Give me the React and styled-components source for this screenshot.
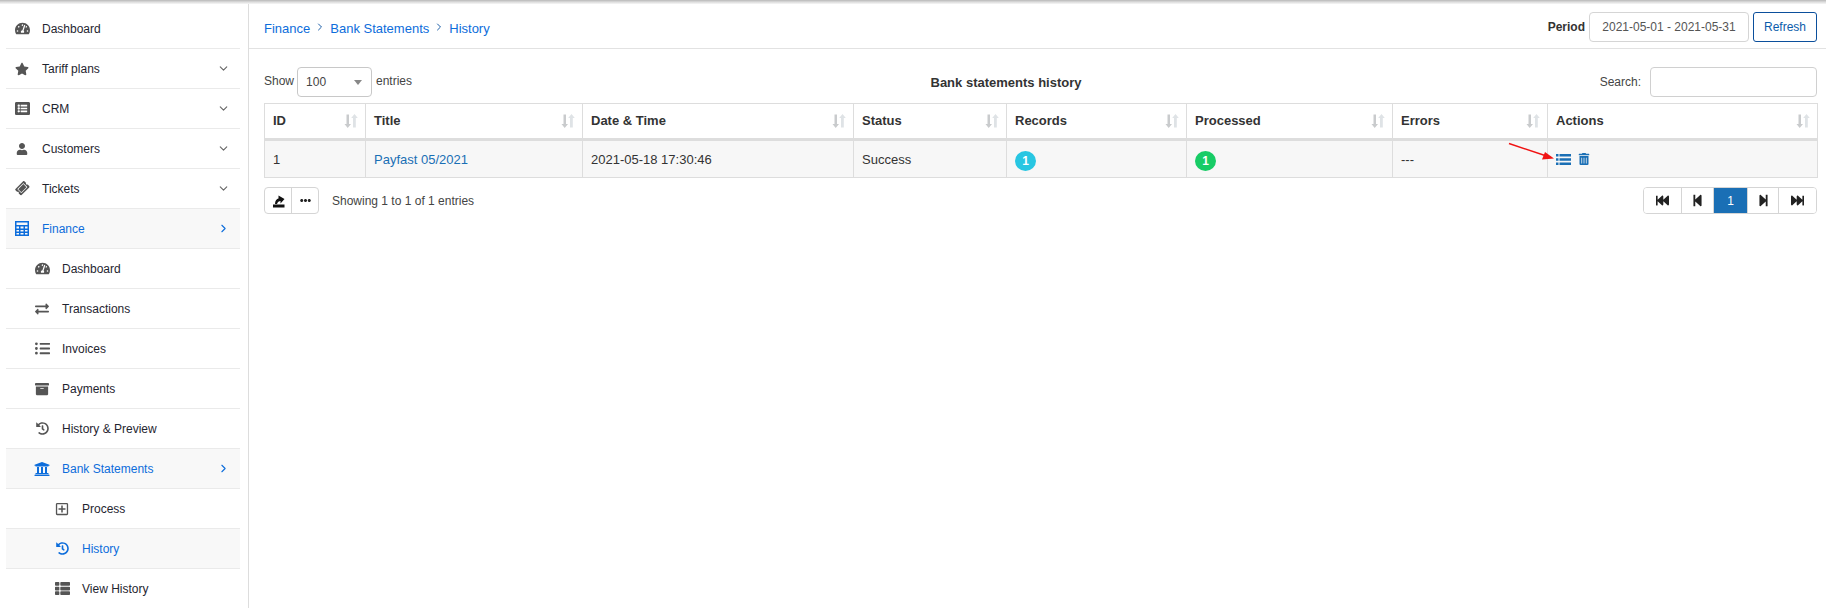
import React from 'react'
import styled, { createGlobalStyle } from 'styled-components'
import {
  FaArchive,
  FaEllipsisH,
  FaExchangeAlt,
  FaFastBackward,
  FaFastForward,
  FaHistory,
  FaListAlt,
  FaListUl,
  FaRegPlusSquare,
  FaStar,
  FaStepBackward,
  FaStepForward,
  FaTachometerAlt,
  FaThList,
  FaTicketAlt,
  FaTrashAlt,
  FaUniversity,
  FaUser,
} from 'react-icons/fa'
import { ChevronDown, ChevronRight } from 'lucide-react'

const BLUE = '#0d6ddb'
const DARK_BLUE = '#1a6fb5'

const GlobalStyle = createGlobalStyle`
  html, body {
    margin: 0;
    padding: 0;
    background: #fff;
    overflow: hidden;
  }
  body {
    font-family: "Liberation Sans", Arial, sans-serif;
    font-size: 13px;
    color: #333;
  }
`

const Page = styled.div`
  position: relative;
  display: flex;
  width: 1826px;
  height: 608px;
  overflow: hidden;
`

const TopShadow = styled.div`
  position: absolute;
  top: 0;
  left: 0;
  right: 0;
  height: 4px;
  background: linear-gradient(#b8b8b8, #dcdcdc 50%, #f7f7f7);
`

const Sidebar = styled.nav`
  flex: 0 0 249px;
  box-sizing: border-box;
  padding: 9px 8px 0 6px;
  border-right: 1px solid #ddd;
  height: 608px;
  overflow: hidden;
`

const MenuRow = styled.div`
  display: flex;
  align-items: center;
  box-sizing: border-box;
  height: 40px;
  padding-left: ${({ $level }) => 6 + $level * 20}px;
  padding-right: 10px;
  border-bottom: 1px solid #eaeaea;
  background: ${({ $active }) => ($active ? '#f8f8f8' : '#fff')};
  color: ${({ $active }) => ($active ? BLUE : '#1f2530')};
  font-size: 12px;
`

const MenuIcon = styled.span`
  display: flex;
  justify-content: center;
  align-items: center;
  flex: 0 0 20px;
  margin-right: 10px;
  color: ${({ $active }) => ($active ? BLUE : '#555')};
  font-size: ${({ $size }) => $size || 14}px;
  transform: ${({ $rotate }) => ($rotate ? 'rotate(-45deg)' : 'none')};
`

const MenuLabel = styled.span`
  flex: 1;
`

const Caret = styled.span`
  display: flex;
  color: ${({ $active }) => ($active ? BLUE : '#666')};
`

const Main = styled.main`
  flex: 1;
  min-width: 0;
`

const Header = styled.header`
  display: flex;
  align-items: center;
  justify-content: space-between;
  box-sizing: border-box;
  height: 49px;
  padding: 5px 9px 0 15px;
  border-bottom: 1px solid #e2e2e2;
`

const Breadcrumbs = styled.div`
  display: flex;
  align-items: center;
  gap: 4px;
  padding-top: 3px;
  color: ${BLUE};
  font-size: 13px;
`

const CrumbSeparator = styled.span`
  display: flex;
  color: #1d5fa8;
  margin-top: -3px;
`

const PeriodBar = styled.div`
  display: flex;
  align-items: center;
  gap: 4px;
`

const PeriodLabel = styled.b`
  font-size: 12px;
  color: #333;
`

const PeriodInput = styled.div`
  box-sizing: border-box;
  width: 160px;
  height: 30px;
  line-height: 28px;
  text-align: center;
  border: 1px solid #d5d5d5;
  border-radius: 4px;
  font-size: 12px;
  color: #555;
`

const RefreshButton = styled.button`
  box-sizing: border-box;
  width: 64px;
  height: 30px;
  padding: 0;
  background: #fff;
  border: 1px solid #0b4f9c;
  border-radius: 3px;
  color: #0b5cab;
  font: 12px "Liberation Sans", Arial, sans-serif;
`

const Content = styled.section`
  padding: 18px 9px 0 15px;
`

const Controls = styled.div`
  display: grid;
  grid-template-columns: 148px 1fr 217px;
  align-items: center;
  height: 30px;
  margin-bottom: 6px;
  font-size: 12px;
`

const ShowEntries = styled.div`
  display: flex;
  align-items: center;
  gap: 4px;
  margin-top: -3px;
  color: #444;
`

const SelectBox = styled.div`
  display: flex;
  align-items: center;
  justify-content: space-between;
  box-sizing: border-box;
  width: 75px;
  height: 30px;
  margin-top: 3px;
  margin-left: -1px;
  padding: 0 9px 0 8px;
  border: 1px solid #c8c8c8;
  border-radius: 4px;
  color: #444;
`

const SelectArrow = styled.span`
  width: 0;
  height: 0;
  border-left: 4px solid transparent;
  border-right: 4px solid transparent;
  border-top: 5px solid #888;
`

const TableTitle = styled.div`
  text-align: center;
  font-size: 13px;
  font-weight: bold;
  color: #333;
`

const SearchBox = styled.label`
  display: flex;
  align-items: center;
  justify-content: flex-end;
  gap: 9px;
  color: #444;
`

const SearchInput = styled.input`
  box-sizing: border-box;
  width: 167px;
  height: 30px;
  padding: 0 8px;
  border: 1px solid #d0d0d0;
  border-radius: 4px;
  outline: none;
`

const Table = styled.table`
  width: 1553px;
  table-layout: fixed;
  border-collapse: collapse;
  font-size: 13px;
`

const HeadCell = styled.th`
  position: relative;
  box-sizing: border-box;
  height: 36px;
  padding: 0 8px 1px;
  border: 1px solid #ddd;
  border-bottom: 3px solid #ddd;
  text-align: left;
  font-weight: bold;
  color: #333;
`

const SortMark = styled.svg`
  position: absolute;
  right: 7px;
  top: 9px;
`

const BodyCell = styled.td`
  box-sizing: border-box;
  height: 38px;
  padding: 0 8px;
  border: 1px solid #ddd;
  background: #f7f7f7;
  color: #333;
`

const TitleLink = styled.a`
  color: ${DARK_BLUE};
`

const CountBadge = styled.span`
  display: inline-flex;
  align-items: center;
  justify-content: center;
  width: 21px;
  height: 20px;
  margin-top: 3px;
  border-radius: 50%;
  background: ${({ $tone }) => $tone};
  color: #fff;
  font-size: 12px;
  font-weight: bold;
`

const ActionIcons = styled.div`
  display: flex;
  align-items: center;
  gap: 7px;
  color: ${DARK_BLUE};
`

const Arrow = styled.svg`
  position: absolute;
  left: 1505px;
  top: 140px;
`

const Footer = styled.div`
  display: flex;
  align-items: center;
  height: 27px;
  margin-top: 9px;
`

const ButtonGroup = styled.div`
  display: flex;
  box-sizing: border-box;
  height: 27px;
  border: 1px solid #d5d5d5;
  border-radius: 4px;
  overflow: hidden;
`

const ToolButton = styled.div`
  display: flex;
  align-items: center;
  justify-content: center;
  width: 26px;
  color: #222;
  font-size: 11px;
  & + & {
    border-left: 1px solid #d5d5d5;
  }
`

const EntriesInfo = styled.div`
  flex: 1;
  margin-left: 13px;
  font-size: 12px;
  color: #444;
`

const PageButton = styled.div`
  display: flex;
  align-items: center;
  justify-content: center;
  box-sizing: border-box;
  width: ${({ $width }) => $width}px;
  background: ${({ $active }) => ($active ? DARK_BLUE : '#fff')};
  color: ${({ $active }) => ($active ? '#fff' : '#222')};
  font-size: ${({ $active }) => ($active ? '12px' : '13px')};
  & + & {
    border-left: 1px solid #d5d5d5;
  }
`

const CalculatorIcon = () => (
  <svg width="14" height="15" viewBox="0 0 14 15" fill="currentColor">
    <path d="M0 0h14v15H0zM1.500 1.500v2.500h11V1.500zM1.500 5.500v2h2.500v-2zM5.500 5.500v2h3v-2zM10 5.500v2h2.500v-2zM1.500 9v1.500h2.500V9zM5.500 9v1.500h3V9zM10 9v1.500h2.500V9zM1.500 12v1.500h2.500V12zM5.500 12v1.500h3V12zM10 12v1.500h2.500V12z" fillRule="evenodd" />
  </svg>
)

const BarsIcon = () => (
  <svg width="15" height="11" viewBox="0 0 15 11" fill="currentColor">
    <path d="M0 0h2.500v2.500H0zM3.500 0H15v2.500H3.500zM0 4.200h2.500v2.500H0zM3.500 4.200H15v2.500H3.500zM0 8.400h2.500V11H0zM3.500 8.400H15V11H3.500z" />
  </svg>
)

const ExportIcon = () => (
  <svg width="13" height="14" viewBox="0 0 13 14">
    <path d="M1 10.500h11.500V13.500H1z" fill="#111" />
    <path d="M3 10c0-3.500 1.500-5 3.500-5.500V1.500L12.500 5 8.500 9.500V7c-1.500.2-3 1-3.500 3z" fill="#111" />
  </svg>
)

const menu = [
  { label: 'Dashboard', icon: <FaTachometerAlt />, level: 0, size: 15 },
  { label: 'Tariff plans', icon: <FaStar />, level: 0, caret: 'down' },
  { label: 'CRM', icon: <FaListAlt />, level: 0, caret: 'down', size: 15 },
  { label: 'Customers', icon: <FaUser />, level: 0, caret: 'down', size: 12 },
  { label: 'Tickets', icon: <FaTicketAlt />, level: 0, caret: 'down', rotate: true, size: 13 },
  { label: 'Finance', icon: <CalculatorIcon />, level: 0, caret: 'right', active: true },
  { label: 'Dashboard', icon: <FaTachometerAlt />, level: 1, size: 15 },
  { label: 'Transactions', icon: <FaExchangeAlt />, level: 1 },
  { label: 'Invoices', icon: <FaListUl />, level: 1, size: 15 },
  { label: 'Payments', icon: <FaArchive />, level: 1 },
  { label: 'History & Preview', icon: <FaHistory />, level: 1, size: 13 },
  { label: 'Bank Statements', icon: <FaUniversity />, level: 1, caret: 'right', active: true, size: 16 },
  { label: 'Process', icon: <FaRegPlusSquare />, level: 2 },
  { label: 'History', icon: <FaHistory />, level: 2, active: true, size: 13 },
  { label: 'View History', icon: <FaThList />, level: 2, size: 15 },
]

const columns = [
  { title: 'ID', width: 101 },
  { title: 'Title', width: 217 },
  { title: 'Date & Time', width: 271 },
  { title: 'Status', width: 153 },
  { title: 'Records', width: 180 },
  { title: 'Processed', width: 206 },
  { title: 'Errors', width: 155 },
  { title: 'Actions', width: 270 },
]

const pages = [
  { width: 37, content: <FaFastBackward /> },
  { width: 32, content: <FaStepBackward /> },
  { width: 34, content: '1', active: true },
  { width: 31, content: <FaStepForward /> },
  { width: 38, content: <FaFastForward /> },
]

const SortIcon = () => (
  <SortMark width="14" height="16" viewBox="0 0 14 16">
    <path d="M2.500 1.500h2.500v9.500h2L3.700 15 .5 11h2z" fill="#c9cbcd" />
    <path d="M10.500 1l3.300 4h-2v9.500H9V5H7.200z" fill="#dfe3e6" />
  </SortMark>
)

const App = () => (
  <Page>
    <GlobalStyle />
    <TopShadow />
    <Sidebar>
      {menu.map(({ label, icon, level, caret, active, rotate, size }, index) => (
        <MenuRow key={`${label}-${index}`} $level={level} $active={active}>
          <MenuIcon $active={active} $rotate={rotate} $size={size}>
            {icon}
          </MenuIcon>
          <MenuLabel>{label}</MenuLabel>
          {caret && (
            <Caret $active={active}>
              {caret === 'down' ? <ChevronDown size={13} /> : <ChevronRight size={13} />}
            </Caret>
          )}
        </MenuRow>
      ))}
    </Sidebar>
    <Main>
      <Header>
        <Breadcrumbs>
          <span>Finance</span>
          <CrumbSeparator><ChevronRight size={12} /></CrumbSeparator>
          <span>Bank Statements</span>
          <CrumbSeparator><ChevronRight size={12} /></CrumbSeparator>
          <span>History</span>
        </Breadcrumbs>
        <PeriodBar>
          <PeriodLabel>Period</PeriodLabel>
          <PeriodInput>2021-05-01 - 2021-05-31</PeriodInput>
          <RefreshButton>Refresh</RefreshButton>
        </PeriodBar>
      </Header>
      <Content>
        <Controls>
          <ShowEntries>
            Show
            <SelectBox>
              100
              <SelectArrow />
            </SelectBox>
            entries
          </ShowEntries>
          <TableTitle>Bank statements history</TableTitle>
          <SearchBox>
            Search:
            <SearchInput />
          </SearchBox>
        </Controls>
        <Table>
          <colgroup>
            {columns.map(({ title, width }) => (
              <col key={title} width={width} />
            ))}
          </colgroup>
          <thead>
            <tr>
              {columns.map(({ title }) => (
                <HeadCell key={title}>
                  {title}
                  <SortIcon />
                </HeadCell>
              ))}
            </tr>
          </thead>
          <tbody>
            <tr>
              <BodyCell>1</BodyCell>
              <BodyCell><TitleLink>Payfast 05/2021</TitleLink></BodyCell>
              <BodyCell>2021-05-18 17:30:46</BodyCell>
              <BodyCell>Success</BodyCell>
              <BodyCell><CountBadge $tone="#28c6e2">1</CountBadge></BodyCell>
              <BodyCell><CountBadge $tone="#18cc66">1</CountBadge></BodyCell>
              <BodyCell>---</BodyCell>
              <BodyCell>
                <ActionIcons>
                  <BarsIcon />
                  <FaTrashAlt size={12} />
                </ActionIcons>
              </BodyCell>
            </tr>
          </tbody>
        </Table>
        <Footer>
          <ButtonGroup>
            <ToolButton><ExportIcon /></ToolButton>
            <ToolButton><FaEllipsisH /></ToolButton>
          </ButtonGroup>
          <EntriesInfo>Showing 1 to 1 of 1 entries</EntriesInfo>
          <ButtonGroup>
            {pages.map(({ width, content, active }, index) => (
              <PageButton key={index} $width={width} $active={active}>
                {content}
              </PageButton>
            ))}
          </ButtonGroup>
        </Footer>
      </Content>
    </Main>
    <Arrow width="52" height="24" viewBox="0 0 52 24">
      <path d="M4 3.500L40 15.500" stroke="#f01414" strokeWidth="1.500" fill="none" />
      <path d="M49 18.500L37 19.500 40 12z" fill="#f01414" />
    </Arrow>
  </Page>
)

export default App
